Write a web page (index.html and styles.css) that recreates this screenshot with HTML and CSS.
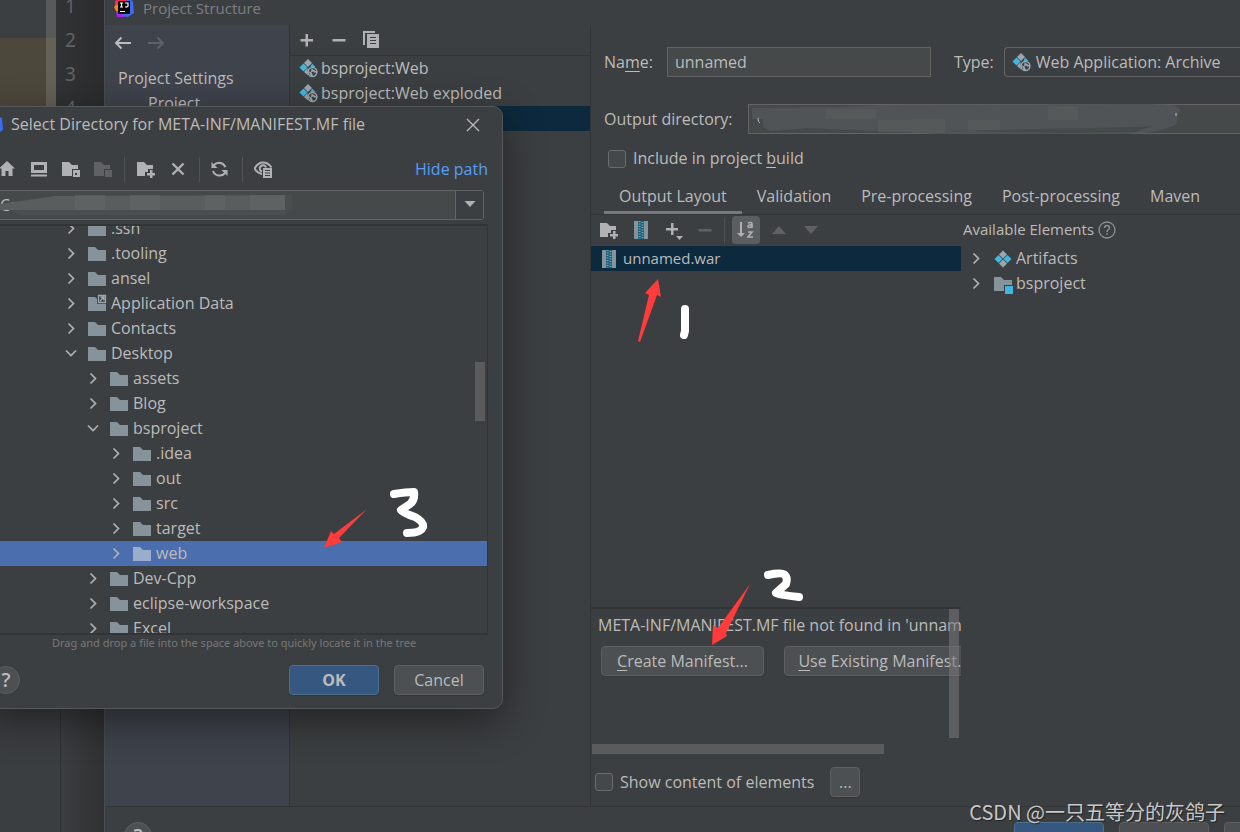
FILE: index.html
```html
<!DOCTYPE html>
<html lang="en">
<head>
<meta charset="utf-8">
<title>Project Structure</title>
<link rel="stylesheet" href="styles.css">
</head>
<body>
<svg class="sprite" aria-hidden="true">
  <symbol id="folder" viewBox="0 0 20 20"><path d="M1 3h7l3 3h8v11H1z"/></symbol>
  <symbol id="chev-right" viewBox="0 0 20 20"><path d="M7.500 4.500 12.500 9.500l-5 5" fill="none" stroke="#afb1b3" stroke-width="1.700"/></symbol>
  <symbol id="chev-down" viewBox="0 0 20 20"><path d="M5 6.500l5 5 5-5" fill="none" stroke="#afb1b3" stroke-width="1.700"/></symbol>
  <symbol id="plus" viewBox="0 0 20 20"><path d="M8.500 4H11v5h5v2.500h-5v5H8.500v-5h-5V9h5z"/></symbol>
  <symbol id="minus" viewBox="0 0 20 20"><path d="M3.500 9h13v2.500h-13z"/></symbol>
  <symbol id="folder-plus" viewBox="0 0 20 20"><path d="M1 3h7l3 3h6v4h-5v3H9v4H1z"/><path d="M14 11h2.500v3H19v2.500h-2.500V19H14v-2.500h-3V14h3z"/></symbol>
  <symbol id="folder-box" viewBox="0 0 20 20"><path d="M1 3h7l3 3h6v4h-6v7H1z"/><path fill-rule="evenodd" d="M12 11h7v7h-7zm2 3v2h2v-2z"/></symbol>
  <symbol id="folder-solid-box" viewBox="0 0 20 20"><path d="M1 3h7l3 3h6v4h-6v7H1z"/><path d="M12 11h7v7h-7z"/></symbol>
  <symbol id="web-artifact" viewBox="0 0 20 20"><path fill="#9aa7b0" d="M9 0l4 4-4 4-4-4z"/><path fill="#40b6e0" d="M4.500 4.500l4 4-4 4-4-4zM13 4.500l3.500 3.500h-5z"/><path fill="#9aa7b0" d="M8.500 9l-3.500 4 4 3.500z"/><circle cx="13.500" cy="13" r="4.400" fill="#3c3f41" stroke="#9aa7b0" stroke-width="1.500"/><path fill="#9aa7b0" d="M9.500 12l3 1.500 1.500 3-2 1zM12.500 9.500l5 3-1.500 1.500-2-1.500-2 1z"/></symbol>
  <symbol id="artifact" viewBox="0 0 20 20"><path fill="#9aa7b0" d="M10 1.500l4 4-4 4-4-4zM10 10.500l4 4-4 4-4-4z"/><path fill="#40b6e0" d="M5.500 6l4 4-4 4-4-4zM14.500 6l4 4-4 4-4-4z"/></symbol>
  <symbol id="archive" viewBox="0 0 20 20"><path fill="#87939a" d="M3 1h4v18H3zM13 1h4v18h-4z"/><path fill="#2f5a6c" d="M7 1h6v18H7z"/><path d="M8.500 1v18M11.500 2v17" fill="none" stroke="#40b6e0" stroke-width="2" stroke-dasharray="1 1.500"/></symbol>
  <symbol id="idea" viewBox="0 0 20 20"><path fill="#fe2857" d="M1 3 6 0l8 2-8 10-5-3z"/><path fill="#fc801d" d="M0 9l3-3 4 7-4 2z"/><path fill="#af1df5" d="M2 13l12 2-4 4H3z"/><path fill="#3b6cf0" d="M13 1l6 2 1 12-6 4-6-1z"/><path fill="#080808" d="M4 3h12v13H4z"/><path d="M6 5h3M7.500 5v4M6 9h3M11 5h3v3q0 1-3 1M6 13.500h5" fill="none" stroke="#fff" stroke-width="1.200"/></symbol>
</svg>

<div class="desktop">
  <div class="editor" aria-hidden="true">
    <div class="editor-top">
      <div class="editor-pane"></div>
      <div class="editor-scroll"></div>
      <ol class="gutter"><li>1</li><li>2</li><li>3</li><li>4</li></ol>
    </div>
    <div class="editor-bottom"><div class="tool-pane"></div></div>
  </div>

  <section class="structure">
    <header class="titlebar"><svg class="icon"><use href="#idea"/></svg><span>Project Structure</span></header>
    <div class="structure-body">
      <nav class="sidebar">
        <div class="history">
          <button class="tool" aria-label="Back"><svg class="icon"><path d="M18 10H3M8.500 4.500 3 10l5.500 5.500" fill="none" stroke="#bbbdbf" stroke-width="2"/></svg></button>
          <button class="tool" aria-label="Forward"><svg class="icon"><path d="M1 10h15M10.500 4.500 16 10l-5.500 5.500" fill="none" stroke="#5f6265" stroke-width="2"/></svg></button>
        </div>
        <h2 class="group">Project Settings</h2>
        <a class="nav-item" href="#project">Project</a>
      </nav>

      <div class="artifact-list">
        <div class="list-tools">
          <button class="tool" aria-label="Add"><svg class="icon"><use href="#plus"/></svg></button>
          <button class="tool" aria-label="Remove"><svg class="icon"><use href="#minus"/></svg></button>
          <button class="tool" aria-label="Copy"><svg class="icon"><path d="M2 1h12v2H4v12H2z"/><path fill-rule="evenodd" d="M6 4h12v14H6zm3 3v1h6V7zm0 3v1h6v-1zm0 3v1h6v-1z"/></svg></button>
        </div>
        <ul class="rows">
          <li><svg class="icon"><use href="#web-artifact"/></svg>bsproject:Web</li>
          <li><svg class="icon"><use href="#web-artifact"/></svg>bsproject:Web exploded</li>
          <li class="selected"></li>
        </ul>
      </div>

      <main class="details">
        <div class="form">
          <div class="form-row">
            <label for="name">Na<u>m</u>e:</label>
            <input class="field name-field" id="name" value="unnamed">
            <label class="type-label" for="type">Type:</label>
            <div class="type-box">
              <svg class="icon"><use href="#web-artifact"/></svg>
              <select id="type"><option>Web Application: Archive</option></select>
            </div>
          </div>
          <div class="form-row">
            <label for="output">Output directory:</label>
            <div class="output-box">
              <input class="field" id="output">
              <svg class="smudge" viewBox="0 0 440 30">
                <path fill="#505456" d="M4 4 90 3l40-2 270-1q32 0 32 6l-4 14q-12 8-50 10H190L60 24l-38 3-7-4V15H4z"/>
                <path fill="#5a5d5e" opacity=".6" d="M78 5h50v10H78zM130 16h45v12h-45zM165 15h32v14h-32zM220 16h32v12h-32zM300 2h30v14h-30z"/>
                <path fill="#454a4b" d="M200 27l190-4 15-1-18 6-70 1z"/>
                <path d="M10 14q0 5 2 5M428 9v3" fill="none" stroke="#bbb" stroke-width="1"/>
              </svg>
            </div>
          </div>
          <label class="check include"><input type="checkbox"><span>Include in project <u>b</u>uild</span></label>
        </div>

        <div class="tabs" role="tablist">
          <button class="tab active" role="tab">Output Layout</button>
          <button class="tab" role="tab">Validation</button>
          <button class="tab" role="tab">Pre-processing</button>
          <button class="tab" role="tab">Post-processing</button>
          <button class="tab" role="tab">Maven</button>
        </div>

        <div class="layout">
          <div class="output-col">
            <div class="layout-tools">
              <button class="tool" aria-label="New folder"><svg class="icon"><use href="#folder-plus"/></svg></button>
              <button class="tool" aria-label="New archive"><svg class="icon"><use href="#archive"/></svg></button>
              <button class="tool" aria-label="Add copy"><svg class="icon"><path d="M8 3h2.500v5H15v2.500h-4.500V15H8v-4.500H3V8h5z"/><path d="M13 16h7l-3.500 4z"/></svg></button>
              <button class="tool dim" aria-label="Remove"><svg class="icon"><use href="#minus"/></svg></button>
              <span class="sep"></span>
              <button class="tool pressed" aria-label="Sort by name"><svg class="icon"><path d="M4 2h2v11h3l-4 4-4-4h3z"/><path d="M12 3q4-1.500 4 1v4M16 5q-4-.5-4 1.500t4 0M12 12h4l-4 5h5" fill="none" stroke="#afb1b3" stroke-width="1.600"/></svg></button>
              <button class="tool dim" aria-label="Move up"><svg class="icon"><path d="M3 14l7-8 7 8z"/></svg></button>
              <button class="tool dim" aria-label="Move down"><svg class="icon"><path d="M3 6l7 8 7-8z"/></svg></button>
            </div>
            <div class="war-row"><svg class="icon"><use href="#archive"/></svg>unnamed.war</div>
            <div class="layout-space"></div>
            <div class="manifest">
              <p>META-INF/MANIFEST.MF file not found in 'unnamed.war'</p>
              <div class="manifest-actions">
                <button class="button create"><u>C</u>reate Manifest...</button>
                <button class="button use"><u>U</u>se Existing Manifest...</button>
              </div>
              <span class="vbar"></span>
              <span class="hbar"></span>
            </div>
          </div>
          <div class="available">
            <h3>Available Elements<svg class="icon"><circle cx="10" cy="10" r="8" fill="none" stroke="#8b9095" stroke-width="1.300"/><path d="M7.500 8q0-2.500 2.500-2.500T12.500 8q0 1.200-1.500 2-1 .5-1 2M10 13v1.700" fill="none" stroke="#8b9095" stroke-width="1.400"/></svg></h3>
            <ul class="rows">
              <li><svg class="icon"><use href="#chev-right"/></svg><svg class="icon"><use href="#artifact"/></svg>Artifacts</li>
              <li><svg class="icon"><use href="#chev-right"/></svg><svg class="icon"><path fill="#87939a" d="M1 3h7l3 3h8v5h-8v6H1z"/><path fill="#40b6e0" d="M12 12h8v8h-8z"/></svg>bsproject</li>
            </ul>
          </div>
        </div>

        <div class="show-row">
          <label class="check"><input type="checkbox"><span>Show content of elements</span></label>
          <button class="button more">...</button>
        </div>
      </main>
    </div>
    <footer class="footer">
      <button class="help">?</button>
      <div class="footer-actions">
        <button class="button primary" aria-label="OK"></button><button class="button" aria-label="Cancel"></button><button class="button" aria-label="Apply"></button>
      </div>
    </footer>
  </section>

  <section class="dialog" role="dialog" aria-label="Select Directory">
    <header class="dialog-title">
      <svg class="icon"><use href="#idea"/></svg>
      <h1>Select Directory for META-INF/MANIFEST.MF file</h1>
      <button class="tool" aria-label="Close"><svg class="icon"><path d="M4 4l12 12M16 4 4 16" fill="none" stroke="#bbb" stroke-width="1.300"/></svg></button>
    </header>
    <div class="dialog-tools">
      <button class="tool" aria-label="Home"><svg class="icon"><path d="M10 2l8 7.500h-2.500V17h-4v-5h-3v5h-4V9.500H2z"/></svg></button>
      <button class="tool" aria-label="Desktop"><svg class="icon"><path fill-rule="evenodd" d="M2 3h16v11H2zm3 3v5h10V6zM2 15.500h16V17.500H2z"/></svg></button>
      <button class="tool" aria-label="Project directory"><svg class="icon"><use href="#folder-box"/></svg></button>
      <button class="tool dim" aria-label="Module directory"><svg class="icon"><use href="#folder-solid-box"/></svg></button>
      <span class="sep"></span>
      <button class="tool" aria-label="New folder"><svg class="icon"><use href="#folder-plus"/></svg></button>
      <button class="tool" aria-label="Delete"><svg class="icon"><path d="M4.500 4.500l11 11M15.500 4.500l-11 11" fill="none" stroke="#afb1b3" stroke-width="2.400"/></svg></button>
      <span class="sep"></span>
      <button class="tool" aria-label="Refresh"><svg class="icon"><path d="M14.500 8A7 7 0 0 0 3 6M2 12a7 7 0 0 0 12 2" fill="none" stroke="#afb1b3" stroke-width="2"/><path d="M.5 3v6h6zM16.500 17v-6h-6z"/></svg></button>
      <span class="sep"></span>
      <button class="tool eye" aria-label="Show hidden files"><svg class="icon"><path d="M8 15Q3 14 .5 9.500 4 3.500 9 3.500t8.500 5" fill="none" stroke="#afb1b3" stroke-width="2"/><path d="M8 12.500A3.200 3.200 0 1 1 12 8.500" fill="none" stroke="#afb1b3" stroke-width="2"/><path fill-rule="evenodd" d="M9 9h9v10H9zm2 2v1h5v-1zm0 2.500v1h5v-1zm0 2.500v1h5v-1z"/></svg></button>
      <a class="hide-path" href="#path">Hide path</a>
    </div>
    <div class="path-box">
      <input class="path" aria-label="Path" value="C:">
      <button class="drop" aria-label="History"><svg class="icon"><path d="M4.500 7h11l-5.500 6z"/></svg></button>
      <svg class="path-smudge" viewBox="0 0 294 24"><path fill="#4a4e4f" d="M0 12 60 4l232-3v15l-10 5H20z"/><path fill="#5a5d5e" d="M0 10 55 2l230-1v15H0z"/><path fill="#636667" opacity=".6" d="M75 1h30v15H75zM130 1h30v15h-30zM205 1h20v15h-20zM250 1h35v15h-35z"/></svg>
    </div>
    <div class="tree">
      <ul class="tree-rows">
        <li class="l1"><svg class="icon"><use href="#chev-right"/></svg><svg class="icon folder"><use href="#folder"/></svg>.ssh</li>
        <li class="l1"><svg class="icon"><use href="#chev-right"/></svg><svg class="icon folder"><use href="#folder"/></svg>.tooling</li>
        <li class="l1"><svg class="icon"><use href="#chev-right"/></svg><svg class="icon folder"><use href="#folder"/></svg>ansel</li>
        <li class="l1"><svg class="icon"><use href="#chev-right"/></svg><svg class="icon folder"><path d="M1 3h7l2 2v5h9v7H1z"/><path fill="#3c3f41" stroke="#9aa7b0" stroke-width="1.300" d="M11.500 1.500h7v7h-7z"/><path fill="none" stroke="#afb1b3" stroke-width="1.300" d="M13 7l4-4M13.500 3H17v3.500"/></svg>Application Data</li>
        <li class="l1"><svg class="icon"><use href="#chev-right"/></svg><svg class="icon folder"><use href="#folder"/></svg>Contacts</li>
        <li class="l1"><svg class="icon"><use href="#chev-down"/></svg><svg class="icon folder"><use href="#folder"/></svg>Desktop</li>
        <li class="l2"><svg class="icon"><use href="#chev-right"/></svg><svg class="icon folder"><use href="#folder"/></svg>assets</li>
        <li class="l2"><svg class="icon"><use href="#chev-right"/></svg><svg class="icon folder"><use href="#folder"/></svg>Blog</li>
        <li class="l2"><svg class="icon"><use href="#chev-down"/></svg><svg class="icon folder"><use href="#folder"/></svg>bsproject</li>
        <li class="l3"><svg class="icon"><use href="#chev-right"/></svg><svg class="icon folder"><use href="#folder"/></svg>.idea</li>
        <li class="l3"><svg class="icon"><use href="#chev-right"/></svg><svg class="icon folder"><use href="#folder"/></svg>out</li>
        <li class="l3"><svg class="icon"><use href="#chev-right"/></svg><svg class="icon folder"><use href="#folder"/></svg>src</li>
        <li class="l3"><svg class="icon"><use href="#chev-right"/></svg><svg class="icon folder"><use href="#folder"/></svg>target</li>
        <li class="l3 current"><svg class="icon"><use href="#chev-right"/></svg><svg class="icon folder"><use href="#folder"/></svg>web</li>
        <li class="l2"><svg class="icon"><use href="#chev-right"/></svg><svg class="icon folder"><use href="#folder"/></svg>Dev-Cpp</li>
        <li class="l2"><svg class="icon"><use href="#chev-right"/></svg><svg class="icon folder"><use href="#folder"/></svg>eclipse-workspace</li>
        <li class="l2"><svg class="icon"><use href="#chev-right"/></svg><svg class="icon folder"><use href="#folder"/></svg>Excel</li>
      </ul>
      <span class="tree-bar"></span>
    </div>
    <p class="hint">Drag and drop a file into the space above to quickly locate it in the tree</p>
    <div class="dialog-actions">
      <button class="help">?</button>
      <button class="button primary">OK</button>
      <button class="button">Cancel</button>
    </div>
  </section>

  <svg class="marks" width="1240" height="832" viewBox="0 0 1240 832" aria-hidden="true">
    <g fill="#ff3b3b">
      <path d="M658 279l3 18-4-2-17 47-2-1 11-46-4-2z"/>
      <path d="M750 584l-24 49 1 3-15 9 1-20 5 3z"/>
      <path d="M367 509l-28 29 3 4-18 6 7-17 3 3z"/>
    </g>
    <g fill="none" stroke="#fff" stroke-linecap="round" stroke-linejoin="round">
      <path stroke-width="8" d="M685 309v22l-1 4"/>
      <path stroke-width="8" d="M768 575q14-3 17 0 3 3 1 9l-10 9q4 2 23 4"/>
      <path stroke-width="8" d="M394 494q12-2 20-2 1 8-4 12l-9 6q2 3 14 7 9 5 8 10-2 6-16 6"/>
    </g>
  </svg>
  <div class="watermark">CSDN @一只五等分的灰鸽子</div>
</div>
</body>
</html>
```
FILE: styles.css
```css
* { box-sizing: border-box; }
body {
  margin: 0;
  background: #3c3f41;
  color: #bbbbbb;
  font: 16px/25px "Open Sans", "Noto Sans", sans-serif;
}
ul, ol { list-style: none; margin: 0; padding: 0; }
p, h1, h2, h3 { margin: 0; font-size: inherit; font-weight: normal; }
button, input, select { font: inherit; color: inherit; margin: 0; }
u { text-underline-offset: 3px; text-decoration-thickness: 1px; }
a { color: inherit; text-decoration: none; }

.sprite { position: absolute; width: 0; height: 0; }
.icon { width: 20px; height: 20px; flex: none; fill: #afb1b3; }
.tool { display: flex; flex: none; padding: 0; border: 0; background: none; }
.dim .icon { fill: #5f6163; }
.sep { width: 1px; height: 25px; background: #515355; }

.desktop { position: relative; height: 100vh; overflow: hidden; }

/* Editor behind the windows */
.editor { display: flex; flex-direction: column; width: 104px; height: 100%; }
.editor-top { display: flex; flex: 0 0 200px; }
.editor-pane { width: 46px; background: linear-gradient(#3c3f41 38px, #4d483c 38px); }
.editor-scroll { width: 10px; background: linear-gradient(#58595b 38px, #666157 38px); }
.gutter {
  flex: 1;
  padding-left: 9px;
  background: linear-gradient(90deg, #313335, #2a2c2e);
  color: #606366;
  font: 19px/34px "Noto Sans", sans-serif;
}
.gutter li:first-child { margin-top: -11px; }
.editor-bottom { display: flex; flex: 1; background: linear-gradient(90deg, #3b3e40 60%, #2f3132); }
.tool-pane { width: 61px; border-right: 1px solid #2f3132; }

/* Project Structure window */
.structure {
  position: absolute;
  inset: 0 0 0 104px;
  display: flex;
  flex-direction: column;
  border-left: 1px solid #4a4d4f;
  background: #3c3f41;
}
.titlebar { display: flex; align-items: center; gap: 9px; height: 25px; padding: 0 9px 9px; color: #7c7f81; font-size: 15px; }
.structure-body { display: flex; flex: 1; min-height: 0; }
.sidebar { width: 185px; border-right: 1px solid #323435; background: #3f434c; }
.history { display: flex; gap: 14px; padding: 8px 8px 13px; }
.group { padding-left: 13px; }
.nav-item { display: block; padding-left: 43px; }
.artifact-list { width: 300px; }
.list-tools { display: flex; align-items: center; gap: 12px; height: 31px; padding-left: 7px; border-bottom: 1px solid #323435; }
.rows li { display: flex; align-items: center; height: 25px; }
.artifact-list .rows li { gap: 2px; padding-left: 9px; }
.rows .selected { background: #0d293e; }

.details { display: flex; flex: 1; flex-direction: column; min-width: 0; border-left: 1px solid #323435; }
.form { display: flex; flex-direction: column; padding: 22px 0 0 13px; }
.form-row { display: flex; align-items: center; height: 30px; margin-bottom: 27px; }
.field { width: 100%; height: 30px; padding: 0 7px; border: 1px solid #646464; border-radius: 0; background: #45494a; outline: 0; }
.name-field { width: 264px; margin-left: 14px; }
.type-label { margin-left: 23px; }
.type-box { position: relative; flex: 1; margin-left: 10px; }
.type-box .icon { position: absolute; left: 8px; top: 6px; }
.type-box select {
  display: block;
  width: 100%;
  height: 30px;
  padding: 0 0 0 31px;
  border: 1px solid #646464;
  border-right: 0;
  border-radius: 4px 0 0 4px;
  background: none;
  appearance: none;
}
.output-box { position: relative; display: flex; flex: 1; margin-left: 15px; }
.output-box .field { border-right: 0; }
.smudge { position: absolute; left: 0; top: 0; width: 440px; height: 30px; }
.check { display: flex; align-items: center; gap: 7px; }
.check input { width: 18px; height: 18px; appearance: none; border: 1px solid #6b6b6b; border-radius: 3px; background: #43494a; }
.include { margin-top: -15px; padding-left: 4px; }

.tabs { display: flex; padding-left: 13px; border-bottom: 1px solid #323435; }
.tab { height: 43px; padding: 10px 15px 0; border: 0; border-bottom: 3px solid transparent; background: none; white-space: nowrap; }
.active { border-bottom-color: #747a80; }

.layout { display: flex; flex: 1; min-height: 0; }
.output-col { display: flex; flex-direction: column; width: 370px; }
.layout-tools { display: flex; align-items: center; gap: 12px; height: 31px; padding: 0 0 1px 8px; }
.layout-tools .sep { margin: 0 -5px 0 -3px; }
.pressed { padding: 4px; border-radius: 4px; background: #5a5e60; }
.pressed + .tool { margin-left: -3px; }
.war-row { display: flex; align-items: center; gap: 4px; height: 25px; padding-left: 8px; background: #0d293e; font-size: 15px; }
.layout-space { flex: 1; }
.manifest { position: relative; height: 151px; padding: 4px 0 0 7px; border-top: 2px solid #323435; overflow: hidden; white-space: nowrap; }
.manifest-actions { display: flex; gap: 20px; padding: 8px 3px; }
.vbar { position: absolute; top: 0; right: 2px; width: 10px; height: 129px; background: rgba(120, 120, 120, .55); }
.hbar { position: absolute; left: 1px; bottom: 4px; width: 292px; height: 10px; background: #5a5b5d; }
.available h3 { display: flex; align-items: center; gap: 3px; padding: 2px 2px 4px; font-size: 15px; }
.available .rows li { gap: 3px; padding-left: 5px; }
.available .rows .icon + .icon { margin-left: 4px; }
.show-row { display: flex; align-items: center; gap: 16px; height: 48px; padding-left: 4px; }

.button {
  flex: none;
  width: 90px;
  height: 30px;
  padding: 0;
  border: 1px solid #5e6060;
  border-radius: 4px;
  background: #4c5052;
  box-shadow: 0 1px 1px #35383a;
  line-height: 28px;
}
.primary { border-color: #4c708c; background: #365880; font-weight: bold; }
.create { width: 163px; }
.use { width: 200px; }
.more { width: 30px; }
.help { width: 28px; height: 28px; flex: none; padding: 0; border: 1px solid #5e6060; border-radius: 50%; background: #4c5052; font-size: 20px; font-weight: 600; line-height: 24px; }

.footer { display: flex; justify-content: space-between; height: 26px; padding: 15px 0 0 19px; border-top: 1px solid #323435; overflow: hidden; }
.footer-actions { display: flex; gap: 15px; margin-right: -74px; }

/* Directory chooser */
.dialog {
  position: absolute;
  left: -16px;
  top: 106px;
  display: flex;
  flex-direction: column;
  width: 519px;
  border: 1px solid #55585a;
  border-radius: 10px;
  background: #3c3f41;
  box-shadow: 0 12px 40px rgba(0, 0, 0, .45);
}
.dialog-title { display: flex; align-items: center; height: 35px; padding-right: 19px; }
.dialog-title .icon:first-child { margin-left: -2px; }
.dialog-title h1 { flex: 1; margin-left: 8px; white-space: nowrap; }
.dialog-title .tool .icon { margin-left: 0; }
.dialog-tools { display: flex; align-items: center; gap: 12px; height: 42px; margin-top: 6px; padding: 0 14px 0 12px; }
.dialog-tools .sep { margin: 0 -1px; }
.hide-path { margin-left: auto; color: #589df6; }
.path-box { position: relative; display: flex; height: 30px; margin: 0 18px 0 0; border: 1px solid #646464; border-radius: 3px; background: #45494a; }
.path { flex: 1; min-width: 0; padding: 0 14px; border: 0; background: none; outline: 0; }
.drop { width: 28px; padding: 3px; border: 0; border-left: 1px solid #646464; background: #3c3f41; }
.path-smudge { position: absolute; left: 14px; top: 3px; width: 294px; height: 24px; }
.tree { position: relative; height: 411px; margin: 4px 14px 0 0; border: 1px solid #323435; border-width: 2px 1px 2px 0; overflow: hidden; }
.tree-rows { margin-top: -10px; }
.tree-rows li { display: flex; align-items: center; gap: 4px; height: 25px; }
.tree-rows .folder { margin-left: 2px; fill: #87939a; }
.tree-rows .l1 { padding-left: 76px; }
.tree-rows .l2 { padding-left: 98px; }
.tree-rows .l3 { padding-left: 121px; }
.tree-rows .current { background: #4b6eaf; }
.current .folder { fill: #9aaecb; }
.tree-bar { position: absolute; right: 2px; top: 136px; width: 10px; height: 59px; background: #595b5d; }
.hint { color: #787878; font: 11px/16px "Noto Sans", sans-serif; padding: 0 0 2px 67px; white-space: nowrap; }
.dialog-actions { display: flex; align-items: center; gap: 15px; padding: 12px 18px 13px 7px; }
.dialog-actions .help { margin-right: auto; }

/* Pen marks and credit over the windows */
.marks { position: absolute; left: 0; top: 0; }
.watermark {
  position: absolute;
  right: 15px;
  bottom: 5px;
  color: #c8c8c8;
  font: 20px/30px "Noto Sans CJK SC", sans-serif;
  text-shadow: 1px 1px 1px #222;
}
```
